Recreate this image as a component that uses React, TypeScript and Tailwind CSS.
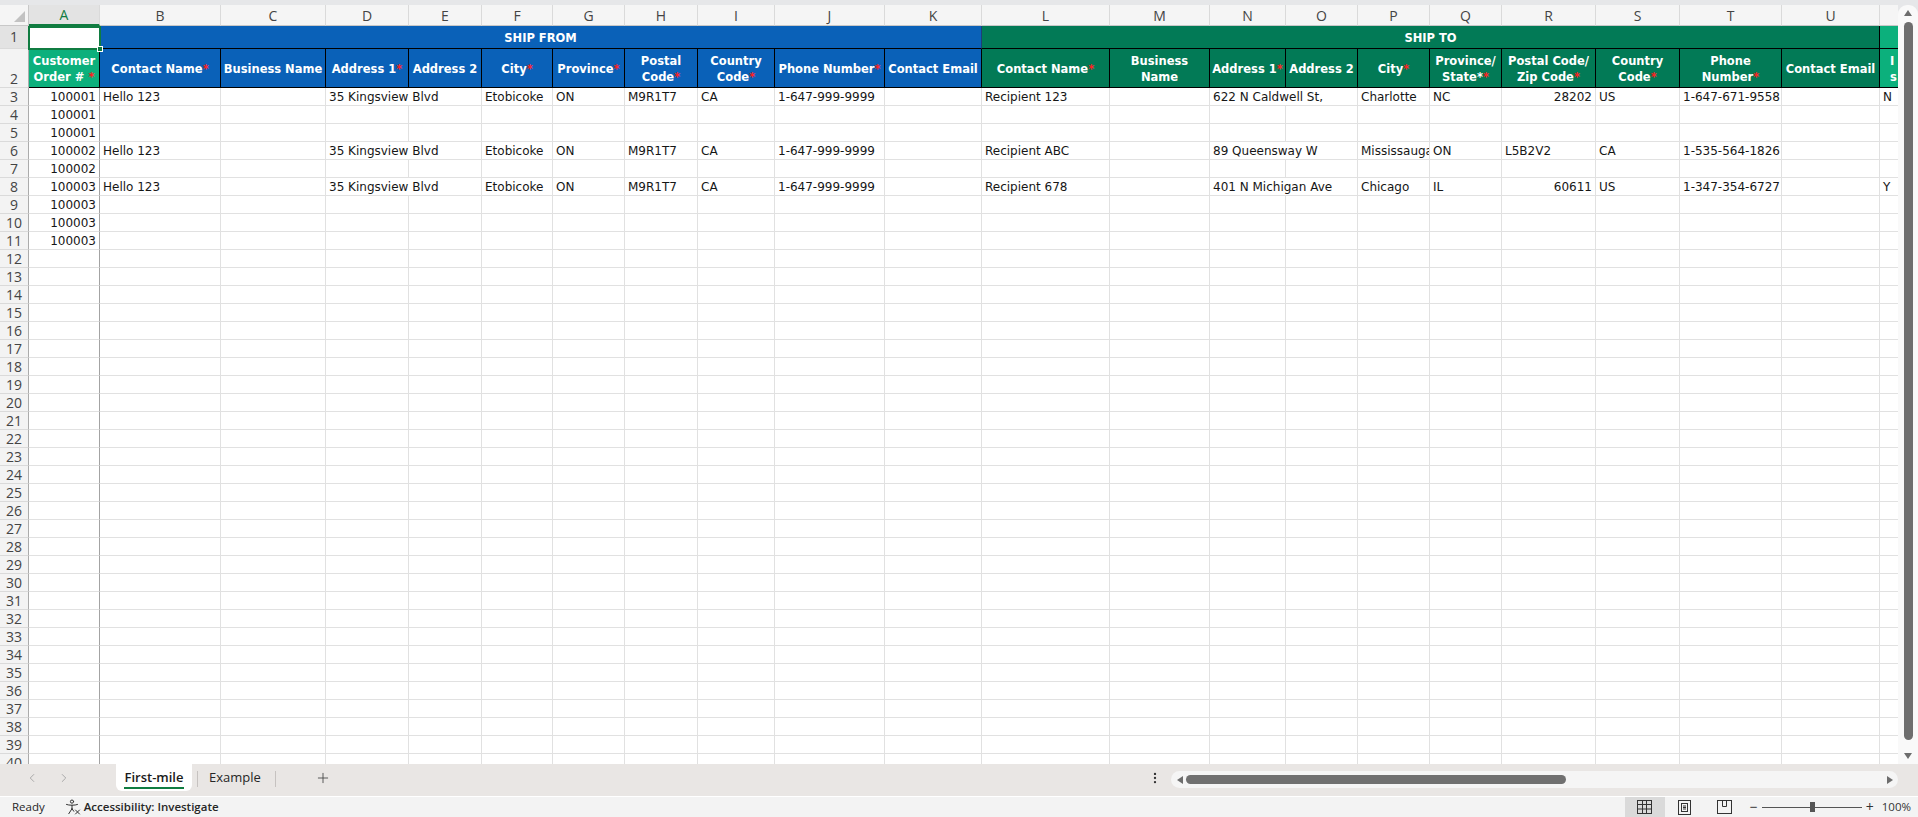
import { ChevronLeft, ChevronRight, Plus, EllipsisVertical } from 'lucide-react'
import clsx from 'clsx'
import type { ReactNode } from 'react'

const COLS = [
  { l: 'A', w: 'w-[71px]' },
  { l: 'B', w: 'w-[121px]' },
  { l: 'C', w: 'w-[105px]' },
  { l: 'D', w: 'w-[83px]' },
  { l: 'E', w: 'w-[73px]' },
  { l: 'F', w: 'w-[71px]' },
  { l: 'G', w: 'w-[72px]' },
  { l: 'H', w: 'w-[73px]' },
  { l: 'I', w: 'w-[77px]' },
  { l: 'J', w: 'w-[110px]' },
  { l: 'K', w: 'w-[97px]' },
  { l: 'L', w: 'w-[128px]' },
  { l: 'M', w: 'w-[100px]' },
  { l: 'N', w: 'w-[76px]' },
  { l: 'O', w: 'w-[72px]' },
  { l: 'P', w: 'w-[72px]' },
  { l: 'Q', w: 'w-[72px]' },
  { l: 'R', w: 'w-[94px]' },
  { l: 'S', w: 'w-[84px]' },
  { l: 'T', w: 'w-[102px]' },
  { l: 'U', w: 'w-[98px]' },
  { l: 'V', w: 'w-[60px]' },
]

type Cell = { t: string; right?: boolean; spanW?: string }
type Row = Record<string, Cell>

// text that spills into the empty neighbour cell spans two columns
function shipment(
  order: string,
  to: { name: string; addr: string; city: string; prov: string; zip: Cell; country: string; phone: string; flag?: string },
): Row {
  const r: Row = {
    A: { t: order, right: true },
    B: { t: 'Hello 123' },
    D: { t: '35 Kingsview Blvd', spanW: 'w-[156px]' },
    F: { t: 'Etobicoke' },
    G: { t: 'ON' },
    H: { t: 'M9R1T7' },
    I: { t: 'CA' },
    J: { t: '1-647-999-9999' },
    L: { t: to.name },
    N: { t: to.addr, spanW: 'w-[148px]' },
    P: { t: to.city },
    Q: { t: to.prov },
    R: to.zip,
    S: { t: to.country },
    T: { t: to.phone },
  }
  if (to.flag) r.V = { t: to.flag }
  return r
}

const ROWS: Record<number, Row> = {
  3: shipment('100001', {
    name: 'Recipient 123',
    addr: '622 N Caldwell St,',
    city: 'Charlotte',
    prov: 'NC',
    zip: { t: '28202', right: true },
    country: 'US',
    phone: '1-647-671-9558',
    flag: 'N',
  }),
  4: { A: { t: '100001', right: true } },
  5: { A: { t: '100001', right: true } },
  6: shipment('100002', {
    name: 'Recipient ABC',
    addr: '89 Queensway W',
    city: 'Mississauga',
    prov: 'ON',
    zip: { t: 'L5B2V2' },
    country: 'CA',
    phone: '1-535-564-1826',
  }),
  7: { A: { t: '100002', right: true } },
  8: shipment('100003', {
    name: 'Recipient 678',
    addr: '401 N Michigan Ave',
    city: 'Chicago',
    prov: 'IL',
    zip: { t: '60611', right: true },
    country: 'US',
    phone: '1-347-354-6727',
    flag: 'Y',
  }),
  9: { A: { t: '100003', right: true } },
  10: { A: { t: '100003', right: true } },
  11: { A: { t: '100003', right: true } },
}

const Req = () => <span className="text-[#ff2020]">*</span>

const HEADERS: { l: string; bg: string; label: ReactNode }[] = [
  { l: 'A', bg: 'bg-[#0cb07c]', label: <>Customer<br />Order # <Req /></> },
  { l: 'B', bg: 'bg-[#0a61b8]', label: <>Contact Name<Req /></> },
  { l: 'C', bg: 'bg-[#0a61b8]', label: 'Business Name' },
  { l: 'D', bg: 'bg-[#0a61b8]', label: <>Address 1<Req /></> },
  { l: 'E', bg: 'bg-[#0a61b8]', label: 'Address 2' },
  { l: 'F', bg: 'bg-[#0a61b8]', label: <>City<Req /></> },
  { l: 'G', bg: 'bg-[#0a61b8]', label: <>Province<Req /></> },
  { l: 'H', bg: 'bg-[#0a61b8]', label: <>Postal<br />Code<Req /></> },
  { l: 'I', bg: 'bg-[#0a61b8]', label: <>Country<br />Code<Req /></> },
  { l: 'J', bg: 'bg-[#0a61b8]', label: <>Phone Number<Req /></> },
  { l: 'K', bg: 'bg-[#0a61b8]', label: 'Contact Email' },
  { l: 'L', bg: 'bg-[#027a56]', label: <>Contact Name<Req /></> },
  { l: 'M', bg: 'bg-[#027a56]', label: <>Business<br />Name</> },
  { l: 'N', bg: 'bg-[#027a56]', label: <>Address 1<Req /></> },
  { l: 'O', bg: 'bg-[#027a56]', label: 'Address 2' },
  { l: 'P', bg: 'bg-[#027a56]', label: <>City<Req /></> },
  { l: 'Q', bg: 'bg-[#027a56]', label: <>Province/<br />State*<Req /></> },
  { l: 'R', bg: 'bg-[#027a56]', label: <>Postal Code/<br />Zip Code<Req /></> },
  { l: 'S', bg: 'bg-[#027a56]', label: <>Country<br />Code<Req /></> },
  { l: 'T', bg: 'bg-[#027a56]', label: <>Phone<br />Number<Req /></> },
  { l: 'U', bg: 'bg-[#027a56]', label: 'Contact Email' },
]

const ROW_NUMS = Array.from({ length: 38 }, (_, i) => i + 3)

function RowHead({ n, className }: { n: number; className?: string }) {
  return (
    <div
      className={clsx(
        'w-[29px] shrink-0 h-full box-border border-r border-r-[#ababab] border-b border-b-[#dadada] flex justify-center font-["Open_Sans",sans-serif] font-normal text-[14px] text-[#444]',
        className ?? 'bg-[#f3f3f3] items-end leading-[17px]',
      )}
    >
      {n}
    </div>
  )
}

function DataRow({ n }: { n: number }) {
  const data = ROWS[n] ?? {}
  const cells: ReactNode[] = []
  for (let i = 0; i < COLS.length; i++) {
    const col = COLS[i]
    const c = data[col.l]
    let w = col.w
    if (c?.spanW) {
      w = c.spanW
      i++
    }
    cells.push(
      <div
        key={col.l}
        className={clsx(
          'h-full shrink-0 box-border border-r border-b flex items-end px-[3px] overflow-hidden whitespace-nowrap leading-[16px]',
          w,
          col.l === 'A' ? 'border-r-[#a3a3a3] border-b-[#e1e1e1]' : 'border-[#e1e1e1]',
          c?.right && 'justify-end',
        )}
      >
        {c?.t}
      </div>,
    )
  }
  return (
    <div className="flex h-[18px] shrink-0">
      <RowHead n={n} />
      {cells}
    </div>
  )
}

function Tri({ dir }: { dir: 'up' | 'down' | 'left' | 'right' }) {
  const pts = {
    up: '0,6 4,0 8,6',
    down: '0,0 8,0 4,6',
    left: '6,0 6,8 0,4',
    right: '0,0 6,4 0,8',
  }[dir]
  const horiz = dir === 'left' || dir === 'right'
  return (
    <svg width={horiz ? 6 : 8} height={horiz ? 8 : 6} className="shrink-0">
      <polygon points={pts} fill="#6d6d6d" />
    </svg>
  )
}

function AccessibilityIcon() {
  return (
    <svg width="16" height="16" viewBox="0 0 16 16" fill="none" stroke="#333" strokeWidth="1" strokeLinecap="round">
      <circle cx="7" cy="2.6" r="1.6" />
      <path d="M1.5 5.5c2.5 1 8.5 1 11 0M7 6.3v3.4M7 9.7l-3.2 5M7 9.7l1.8 2.6" />
      <path d="M10.5 11l4 4M14.5 11l-4 4" />
    </svg>
  )
}

export default function App() {
  return (
    <div className="w-[1918px] h-[817px] overflow-hidden bg-white flex flex-col font-['DejaVu_Sans',sans-serif] text-[12px] text-[#161616]">
      <div className="h-[5px] shrink-0 bg-[#e6e7e9]" />

      <div className="flex h-[759px] shrink-0 bg-[#e6e7e9]">
        {/* sheet */}
        <div className="w-[1898px] h-full overflow-hidden flex flex-col bg-white">
          {/* column letters */}
          <div className="flex h-[21px] shrink-0">
            <div className="w-[29px] shrink-0 box-border border-r border-b border-[#c8c8c8] bg-[#f5f5f5] relative">
              <svg width="11" height="11" className="absolute right-[3px] bottom-[3px]">
                <polygon points="11,0 11,11 0,11" fill="#c2c2c2" />
              </svg>
            </div>
            {COLS.map(c => (
              <div
                key={c.l}
                className={clsx(
                  'shrink-0 h-full box-border border-r border-r-[#dadada] flex items-center justify-center font-["Open_Sans",sans-serif] text-[14px]',
                  c.w,
                  c.l === 'A'
                    ? 'bg-[#e3e3e3] text-[#107c41] border-b-2 border-b-[#107c41]'
                    : 'bg-[#f5f5f5] text-[#444] border-b border-b-[#c8c8c8]',
                )}
              >
                {c.l}
              </div>
            ))}
          </div>

          {/* row 1: section titles */}
          <div className="flex h-[23px] shrink-0 font-bold text-[11.5px] text-white">
            <RowHead n={1} className="bg-[#e3e3e3] items-center leading-[20px]" />
            <div className="w-[71px] shrink-0 h-full bg-white relative">
              <div className="absolute -left-[1px] top-0 -right-[1px] -bottom-[1px] border-2 border-[#107c41]" />
              <div className="absolute -right-[3px] -bottom-[3px] w-[6px] h-[6px] bg-[#107c41] border border-white" />
            </div>
            <div className="w-[882px] shrink-0 h-full box-border bg-[#0a61b8] border-r border-r-[#1d3f78] border-b border-b-black flex items-center justify-center pt-[3px]">
              SHIP FROM
            </div>
            <div className="w-[898px] shrink-0 h-full box-border bg-[#027a56] border-r border-b border-black flex items-center justify-center pt-[3px]">
              SHIP TO
            </div>
            <div className="w-[60px] shrink-0 h-full box-border bg-[#0cb07c] border-b border-black" />
          </div>

          {/* row 2: column headings */}
          <div className="flex h-[39px] shrink-0 font-bold text-[11.5px] leading-[16px] text-white">
            <RowHead n={2} />
            {HEADERS.map((h, i) => (
              <div
                key={h.l}
                className={clsx(
                  'shrink-0 h-full box-border border-r border-b border-black flex items-center justify-center text-center whitespace-nowrap overflow-hidden pt-[1px]',
                  COLS[i].w,
                  h.bg,
                )}
              >
                <span>{h.label}</span>
              </div>
            ))}
            <div className="w-[60px] shrink-0 h-full box-border bg-[#0cb07c] border-b border-black flex items-center pl-[10px] pt-[1px] overflow-hidden">
              <span>
                I<br />s
              </span>
            </div>
          </div>

          {ROW_NUMS.map(n => (
            <DataRow key={n} n={n} />
          ))}
        </div>

        {/* vertical scrollbar */}
        <div className="w-[20px] h-full bg-[#f9f9f9] rounded-t-[9px] flex flex-col items-center pt-[5px] pb-[5px]">
          <Tri dir="up" />
          <div className="mt-[6px] w-[9px] flex-1 rounded-full bg-[#6e6e6e]" />
          <div className="h-[13px] shrink-0" />
          <Tri dir="down" />
        </div>
      </div>

      {/* sheet tabs */}
      <div className="h-[32px] shrink-0 bg-[#e9e6e4] flex items-start font-['Open_Sans',sans-serif] text-[13px] text-[#262626]">
        <div className="w-[116px] shrink-0 h-[28px] flex items-center pl-[25px] gap-[18px] text-[#a0a0a0]">
          <ChevronLeft size={14} strokeWidth={1.5} />
          <ChevronRight size={14} strokeWidth={1.5} />
        </div>
        <div className="w-[76px] h-[27px] shrink-0 bg-white rounded-b-[6px] relative flex items-center justify-center font-semibold text-[#1a1a1a]">
          First-mile
          <div className="absolute left-[8px] right-[8px] top-[23px] h-[2px] bg-[#107c41]" />
        </div>
        <div className="ml-[5px] mt-[7px] w-px h-[16px] bg-[#c6c2c0]" />
        <div className="ml-[11px] h-[28px] flex items-center">Example</div>
        <div className="ml-[14px] mt-[7px] w-px h-[16px] bg-[#c6c2c0]" />
        <div className="ml-[39px] h-[28px] flex items-center text-[#444]">
          <Plus size={16} strokeWidth={1.3} />
        </div>
        <div className="flex-1" />
        <div className="h-[28px] flex items-center text-[#333]">
          <EllipsisVertical size={14} strokeWidth={2} />
        </div>
        <div className="ml-[9px] mt-[7px] w-[727px] h-[17px] rounded-full bg-[#f5f5f5] flex items-center pl-[6px] pr-[5px]">
          <Tri dir="left" />
          <div className="ml-[3px] w-[380px] h-[9px] rounded-full bg-[#707070]" />
          <div className="flex-1" />
          <Tri dir="right" />
        </div>
        <div className="w-[20px] shrink-0" />
      </div>

      {/* status bar */}
      <div className="h-[21px] shrink-0 bg-[#f3f3f3] border-t border-white flex items-center font-['Open_Sans',sans-serif] text-[11.5px] text-[#262626]">
        <span className="ml-[12px]">Ready</span>
        <span className="ml-[20px] flex items-center gap-[3px] font-semibold">
          <AccessibilityIcon />
          Accessibility: Investigate
        </span>
        <div className="flex-1" />
        <div className="w-[40px] h-[20px] bg-[#dadada] flex items-center justify-center">
          <svg width="15" height="14" viewBox="0 0 15 14" fill="none" stroke="#333">
            <rect x=".5" y=".5" width="14" height="13" />
            <path d="M5.5 .5v13M9.5 .5v13M.5 4.5h14M.5 9h14" />
          </svg>
        </div>
        <div className="w-[40px] h-[20px] flex items-center justify-center">
          <svg width="13" height="15" viewBox="0 0 13 15" fill="none" stroke="#333">
            <rect x=".5" y=".5" width="12" height="14" />
            <rect x="3.5" y="3.5" width="6" height="8" />
            <path d="M5 6h3M5 7.5h3M5 9h3" />
          </svg>
        </div>
        <div className="w-[40px] h-[20px] flex items-center justify-center">
          <svg width="15" height="14" viewBox="0 0 15 14" fill="none" stroke="#333">
            <rect x=".5" y=".5" width="14" height="13" />
            <path d="M5.5 .5v6h4v-6" />
          </svg>
        </div>
        <span className="ml-[5px] text-[14px] text-[#333] leading-none">−</span>
        <div className="ml-[4px] w-[100px] h-[10px] relative flex items-center">
          <div className="w-full h-px bg-[#555]" />
          <div className="absolute left-[48px] top-0 w-[5px] h-[10px] bg-[#555]" />
        </div>
        <span className="ml-[4px] text-[14px] text-[#333] leading-none">+</span>
        <span className="ml-[8px] mr-[7px] text-[#333]">100%</span>
      </div>
    </div>
  )
}
